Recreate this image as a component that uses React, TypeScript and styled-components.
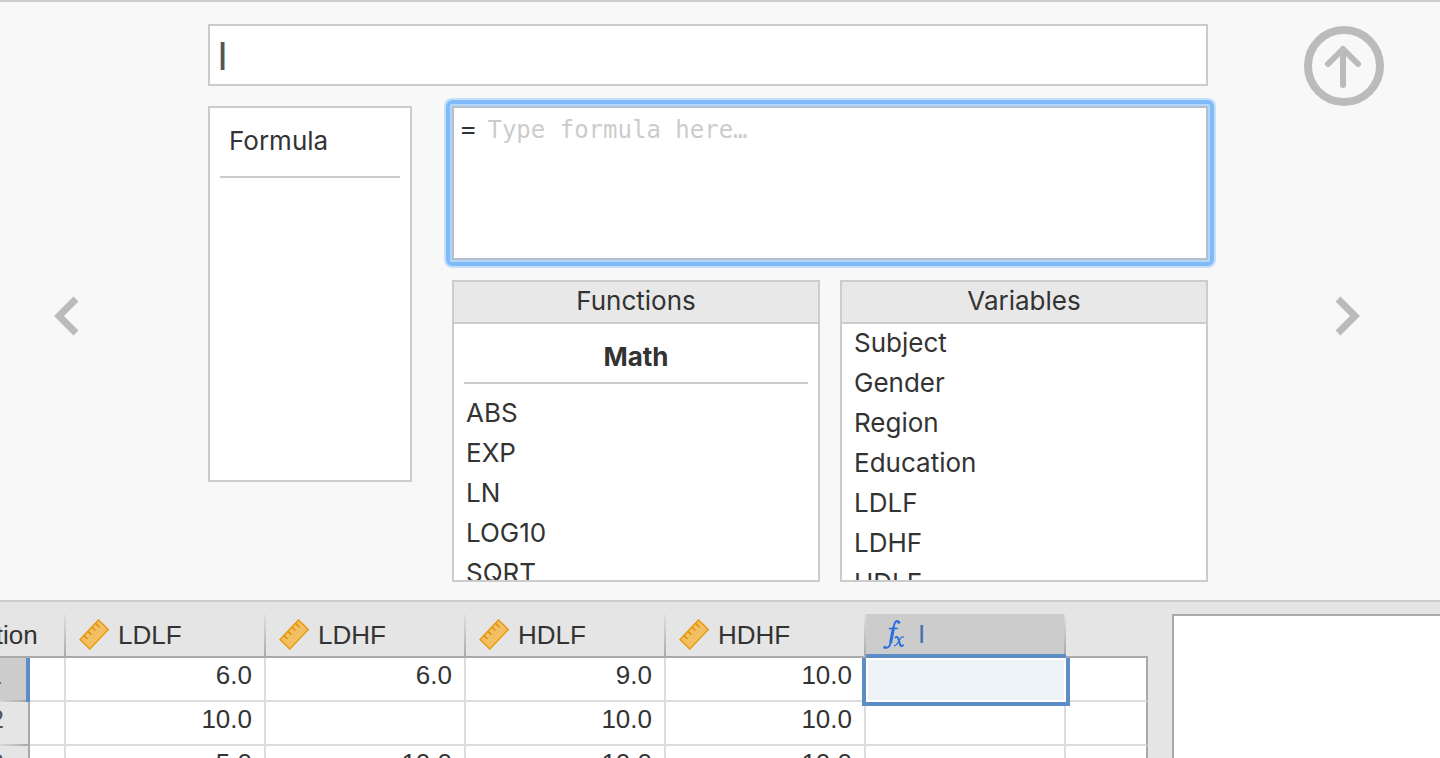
import React, { useState } from "react";
import styled, { createGlobalStyle, css } from "styled-components";

const line = "#cccccc";
const gridLine = "#dddddd";
const gridEdge = "#aaaaaa";
const accent = "#5d8cc6";
const ink = "#333333";
const uiFont = `Inter, "Liberation Sans", sans-serif`;
const gridFont = `"Liberation Sans", Arial, sans-serif`;
const monoFont = `"DejaVu Sans Mono", monospace`;

const GlobalStyle = createGlobalStyle`
  *, *::before, *::after { box-sizing: border-box; }
  body { margin: 0; color: ${ink}; background: #e5e5e5; }
`;

const Page = styled.div`
  display: flex;
  flex-direction: column;
  height: 100vh;
  overflow: hidden;
`;

const Editor = styled.section`
  display: grid;
  grid-template-columns: 208px minmax(0, 1fr) 232px;
  flex: none;
  padding: 22px 0 18px;
  background: #f8f8f8;
  border-top: 2px solid ${line};
  border-bottom: 2px solid ${line};
  font: 26px/40px ${uiFont};
`;

const Side = styled.div`
  display: flex;
  flex-direction: column;
  justify-content: center;
  padding: 26px 52px 0;
`;

const RightSide = styled.div`
  display: flex;
  flex-direction: column;
  justify-content: space-between;
  padding: 2px 56px 0 96px;
`;

const IconButton = styled.button`
  display: block;
  padding: 0;
  border: 0;
  background: none;
  color: #bbbbbb;
  cursor: pointer;

  svg { display: block; }
`;

const NextSlot = styled.div`
  display: flex;
  justify-content: flex-end;
  padding: 0 23px 246px 0;
`;

const Form = styled.div`
  display: flex;
  flex-direction: column;
  gap: 20px;
`;

const NameInput = styled.input`
  width: 100%;
  height: 62px;
  padding: 2px 7px 0;
  border: 2px solid ${line};
  border-radius: 0;
  outline: 0;
  background: #fff;
  color: #555555;
  font: 40px/56px ${gridFont};
`;

const Columns = styled.div`
  display: flex;
  align-items: flex-start;
  gap: 40px;
`;

const TypePanel = styled.div`
  flex: none;
  width: 204px;
  height: 376px;
  padding: 0 10px;
  background: #fff;
  border: 2px solid ${line};
`;

const TypeTitle = styled.div`
  padding: 13px 9px 15px;
  border-bottom: 2px solid ${line};
`;

const Builder = styled.div`
  display: flex;
  flex: 1;
  flex-direction: column;
  gap: 20px;
  min-width: 0;
`;

const FormulaBox = styled.label`
  position: relative;
  display: flex;
  gap: 12px;
  height: 154px;
  padding: 6px 7px;
  background: #fff;
  border: 2px solid #b4bfce;
  font: 24px/32px ${monoFont};

  &::after {
    content: "";
    position: absolute;
    inset: -8px;
    border: 4px solid #7fbbfb;
    border-radius: 6px;
    box-shadow: 0 0 0 2px #c6e0fb, inset 0 0 0 2px #b5d5f8;
    pointer-events: none;
  }
`;

const FormulaInput = styled.textarea`
  flex: 1;
  min-width: 0;
  padding: 0;
  border: 0;
  outline: 0;
  resize: none;
  background: none;
  color: ${ink};
  font: inherit;

  &::placeholder { color: ${line}; opacity: 1; }
`;

const Lists = styled.div`
  display: grid;
  grid-template-columns: 1fr 1fr;
  gap: 20px;
`;

const ListPanel = styled.section`
  height: 302px;
  overflow: hidden;
  background: #fff;
  border: 2px solid ${line};
`;

const ListHeading = styled.h2`
  height: 42px;
  margin: 0;
  background: #e8e8e8;
  border-bottom: 2px solid ${line};
  font: inherit;
  line-height: 38px;
  text-align: center;
`;

const GroupHeading = styled.h3`
  margin: 0 10px 10px;
  padding: 14px 0 6px;
  border-bottom: 2px solid ${line};
  font: inherit;
  font-weight: 700;
  line-height: 38px;
  text-align: center;
`;

const Items = styled.ul`
  margin: 0;
  padding: 0 12px;
  line-height: 38px;
  list-style: none;
`;

const Item = styled.li`
  padding-bottom: 2px;
`;

const Bottom = styled.div`
  display: flex;
  flex: 1;
  gap: 24px;
  min-height: 0;
  padding-top: 12px;
  background: #e5e5e5;
`;

const GridView = styled.div`
  flex: 1;
  min-width: 0;
  overflow: hidden;
`;

const Results = styled.aside`
  flex: none;
  width: 268px;
  background: #fff;
  border: solid ${gridEdge};
  border-width: 2px 0 0 2px;
`;

/* The sheet is scrolled sideways, so its left part lies outside the view. */
const Sheet = styled.table`
  width: calc(100% + 130px);
  margin-left: -130px;
  table-layout: fixed;
  border-collapse: separate;
  border-spacing: 0;
  font: 26px/34px ${gridFont};
`;

const Col = styled.col<{ $w?: number }>`
  ${(p) => p.$w && css`width: ${p.$w}px;`}
`;

const ColumnHead = styled.th<{ $active?: boolean; $plain?: boolean }>`
  height: 44px;
  padding: 0 0 0 13px;
  border-bottom: 2px solid ${gridEdge};
  font-weight: 400;
  text-align: left;
  ${(p) =>
    !p.$plain &&
    css`
      background: linear-gradient(to bottom, #e0e0e0, ${gridEdge}) right / 2px 100% no-repeat;
    `}
  ${(p) =>
    p.$active &&
    css`
      background-color: ${line};
      border-bottom: 4px solid ${accent};
      color: #4272b0;
    `}
`;

const HeadContent = styled.div<{ $active?: boolean }>`
  display: flex;
  align-items: center;
  gap: 9px;
  height: ${(p) => (p.$active ? 40 : 42)}px;
`;

const RowHead = styled.th<{ $active?: boolean }>`
  height: 44px;
  padding: 0 24px 0 0;
  border-right: ${(p) => (p.$active ? `4px solid ${accent}` : `2px solid ${gridEdge}`)};
  background: linear-gradient(to right, ${gridLine} 80%, ${gridEdge}) bottom / 100% 2px no-repeat
    ${(p) => (p.$active ? line : "#e5e5e5")};
  color: #555555;
  font-weight: 400;
  text-align: right;
  vertical-align: top;
`;

const Cell = styled.td<{ $last?: boolean }>`
  position: relative;
  height: 44px;
  padding: 0 12px 0 0;
  background: #fff;
  border-right: 2px solid ${(p) => (p.$last ? gridEdge : gridLine)};
  border-bottom: 2px solid ${gridLine};
  text-align: right;
  vertical-align: top;
`;

const Selection = styled.div`
  position: absolute;
  z-index: 1;
  inset: 0 -6px -6px -4px;
  border: 4px solid ${accent};
  border-top: 0;
  background: #eef3f8;
  box-shadow: inset 0 0 0 2px #fff;
`;

const Ruler = () => (
  <svg width="30" height="32" viewBox="0 0 30 32" aria-hidden="true">
    <path d="M1 20.500 19.500 1 29.300 10.500 10.800 30Z" fill="#f2c063" stroke="#e69a0c" strokeWidth="1.500" />
    <path d="M5 16.500l3.500 3.500M9 12.300l3.500 3.500M13 8.100l3.500 3.500M16.500 4.200l4 4" stroke="#d98c00" strokeWidth="1.300" />
  </svg>
);

const Fx = () => (
  <svg width="30" height="32" viewBox="0 0 30 32" fill="none" stroke="#2a70e0" strokeLinecap="round" aria-hidden="true">
    <path d="M19.800 4.300C19 2 16 2.200 14.900 8L11.700 24.500C11 28.500 8 31 5.700 29.300" strokeWidth="1.800" />
    <path d="M14.600 9 11.600 25" strokeWidth="3" strokeLinecap="butt" />
    <path d="M10.500 10.500h8" strokeWidth="1.600" />
    <path d="M19.700 4.300h.1M5.700 29.200h.1" strokeWidth="3" />
    <path d="M16.500 19.500c2-1.500 2.800.5 3.500 3.500s1.500 6.500 4 4.300" strokeWidth="2" />
    <path d="M24.200 19c-2-.5-3.200 2-4.400 4.200s-2.500 4.800-4.300 4.300" strokeWidth="1.300" />
  </svg>
);

const Chevron = ({ flip = false }: { flip?: boolean }) => (
  <svg width="26" height="40" viewBox="0 0 26 40" fill="none" stroke="currentColor" strokeWidth="7" aria-hidden="true">
    <path d={flip ? "M3 3 20 20 3 37" : "M24 3 7 20 24 37"} />
  </svg>
);

const ArrowUp = () => (
  <svg width="80" height="80" viewBox="0 0 80 80" fill="none" stroke="currentColor" aria-hidden="true">
    <circle cx="40" cy="40" r="36" strokeWidth="8" />
    <path d="M39 59V23M24 38 39 23 54 38" strokeWidth="6" strokeLinecap="round" strokeLinejoin="round" />
  </svg>
);

const functions = ["ABS", "EXP", "LN", "LOG10", "SQRT"];
const variables = ["Subject", "Gender", "Region", "Education", "LDLF", "LDHF", "HDLF"];
const measures = ["LDLF", "LDHF", "HDLF", "HDHF"];
const rows = [
  ["6.0", "6.0", "9.0", "10.0"],
  ["10.0", "", "10.0", "10.0"],
  ["5.0", "10.0", "10.0", "10.0"],
];

export default function App() {
  const [name, setName] = useState("I");
  const [formula, setFormula] = useState("");

  return (
    <Page>
      <GlobalStyle />
      <Editor>
        <Side>
          <IconButton type="button" aria-label="Previous variable"><Chevron /></IconButton>
        </Side>
        <Form>
          <NameInput aria-label="Variable name" value={name} onChange={(e) => setName(e.target.value)} />
          <Columns>
            <TypePanel>
              <TypeTitle>Formula</TypeTitle>
            </TypePanel>
            <Builder>
              <FormulaBox>
                <span>=</span>
                <FormulaInput
                  aria-label="Formula"
                  placeholder="Type formula here…"
                  value={formula}
                  onChange={(e) => setFormula(e.target.value)}
                />
              </FormulaBox>
              <Lists>
                <ListPanel>
                  <ListHeading>Functions</ListHeading>
                  <GroupHeading>Math</GroupHeading>
                  <Items>{functions.map((f) => <Item key={f}>{f}</Item>)}</Items>
                </ListPanel>
                <ListPanel>
                  <ListHeading>Variables</ListHeading>
                  <Items>{variables.map((v) => <Item key={v}>{v}</Item>)}</Items>
                </ListPanel>
              </Lists>
            </Builder>
          </Columns>
        </Form>
        <RightSide>
          <IconButton type="button" aria-label="Close editor"><ArrowUp /></IconButton>
          <NextSlot>
            <IconButton type="button" aria-label="Next variable"><Chevron flip /></IconButton>
          </NextSlot>
        </RightSide>
      </Editor>
      <Bottom>
        <GridView>
          <Sheet>
            <colgroup>
              <Col $w={160} />
              <Col $w={36} />
              {measures.map((m) => <Col key={m} $w={200} />)}
              <Col $w={200} />
              <Col />
            </colgroup>
            <thead>
              <tr>
                <ColumnHead colSpan={2} scope="col">
                  <HeadContent><Ruler />Education</HeadContent>
                </ColumnHead>
                {measures.map((m) => (
                  <ColumnHead key={m} scope="col">
                    <HeadContent><Ruler />{m}</HeadContent>
                  </ColumnHead>
                ))}
                <ColumnHead scope="col" $active>
                  <HeadContent $active><Fx />{name}</HeadContent>
                </ColumnHead>
                <ColumnHead as="td" $plain />
              </tr>
            </thead>
            <tbody>
              {rows.map((values, i) => (
                <tr key={i}>
                  <RowHead scope="row" $active={i === 0}>{i + 1}</RowHead>
                  <Cell />
                  {values.map((v, j) => <Cell key={j}>{v}</Cell>)}
                  <Cell>{i === 0 && <Selection />}</Cell>
                  <Cell $last />
                </tr>
              ))}
            </tbody>
          </Sheet>
        </GridView>
        <Results aria-label="Results" />
      </Bottom>
    </Page>
  );
}
